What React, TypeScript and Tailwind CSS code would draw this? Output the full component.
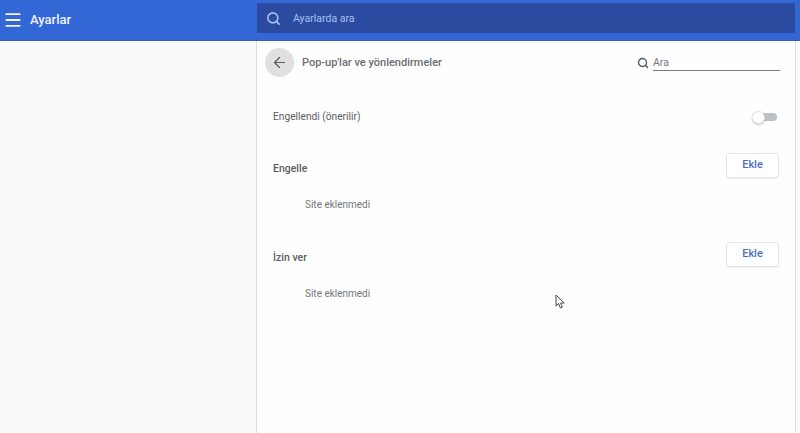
import { Menu, Search, ArrowLeft } from "lucide-react";

function Section({ title, top }: { title: string; top: string }) {
  return (
    <div className={top}>
      <div className="flex items-start justify-between pl-4 pr-4">
        <span className="mt-[9px] text-[10.5px] leading-[14px] font-medium text-[#5a5d61]">{title}</span>
        <button className="flex h-[25px] w-[53px] items-center justify-center rounded-[3px] border border-[#e2e4e7] bg-white text-[11px] font-medium text-[#4a6fc0] shadow-[0_1px_1px_rgba(0,0,0,0.05)]">
          Ekle
        </button>
      </div>
      <div className="mt-[20px] pl-12 text-[10px] leading-[14px] text-[#74777b]">Site eklenmedi</div>
    </div>
  );
}

export default function App() {
  return (
    <div className="relative flex h-[433px] w-[800px] flex-col overflow-hidden bg-[#f9fafa] font-['Roboto',sans-serif]">
      {/* Top bar */}
      <header className="flex h-[41px] shrink-0 border-b border-b-[#2f5fc4] bg-[#3367d6]">
        <div className="flex w-[257px] items-center pl-[3px] text-[#f2f5fc]">
          <Menu size={20} strokeWidth={2.25} />
          <span className="ml-[7px] text-[13px] font-medium text-[#eef2fb]">Ayarlar</span>
        </div>
        <div className="mt-[3px] flex h-[30px] w-[538px] items-center rounded-[1px] bg-[#2a4ba0] pl-[9px]">
          <Search size={15} strokeWidth={2.5} className="text-[#a9c0ee]" />
          <span className="ml-[12px] pt-[1px] text-[10.5px] text-[#a9c0ee]">Ayarlarda ara</span>
        </div>
      </header>

      <div className="flex flex-1">
        <div className="w-[256px]" />
        {/* Content panel */}
        <main className="h-full w-[540px] border-x border-[#dcdee0] bg-[#fefefe]">
          <div className="flex items-center pt-[7px] pl-2 pr-[15px]">
            <button className="flex h-[29px] w-[29px] items-center justify-center rounded-full bg-[#e0e0e0] text-[#55585c]">
              <ArrowLeft size={17} strokeWidth={1.75} />
            </button>
            <h1 className="ml-[8px] pt-[1px] text-[11px] font-medium text-[#6a6d71]">Pop-up'lar ve yönlendirmeler</h1>
            <div className="ml-auto flex items-center">
              <Search size={12} strokeWidth={2.75} className="text-[#55585c]" />
              <div className="ml-[4px] w-[127px] border-b border-[#77797c] pt-[2px] text-[10.5px] leading-[14px] text-[#75787c]">
                Ara
              </div>
            </div>
          </div>

          <div className="mt-[33px] flex h-[14px] items-center justify-between pl-4 pr-[18px]">
            <span className="text-[10.2px] text-[#5a5d61]">Engellendi (önerilir)</span>
            <div className="relative h-[8px] w-[24px] rounded-full bg-[#bdc1c6]">
              <div className="absolute -left-px -top-[2.5px] h-[13px] w-[13px] rounded-full border border-[#e4e5e7] bg-white shadow-[0_1px_2px_rgba(0,0,0,0.25)]" />
            </div>
          </div>

          <Section title="Engelle" top="mt-[29px]" />
          <Section title="İzin ver" top="mt-[30px]" />
        </main>
      </div>

      {/* Mouse cursor */}
      <svg className="absolute left-[555px] top-[294px]" width="12" height="16" viewBox="0 0 12 16">
        <path d="M1 1 L1 12 L3.6 9.7 L5.4 14 L7.4 13.1 L5.6 9 L9.2 9 Z" fill="#fff" stroke="#44474a" strokeWidth="1" />
      </svg>
    </div>
  );
}
